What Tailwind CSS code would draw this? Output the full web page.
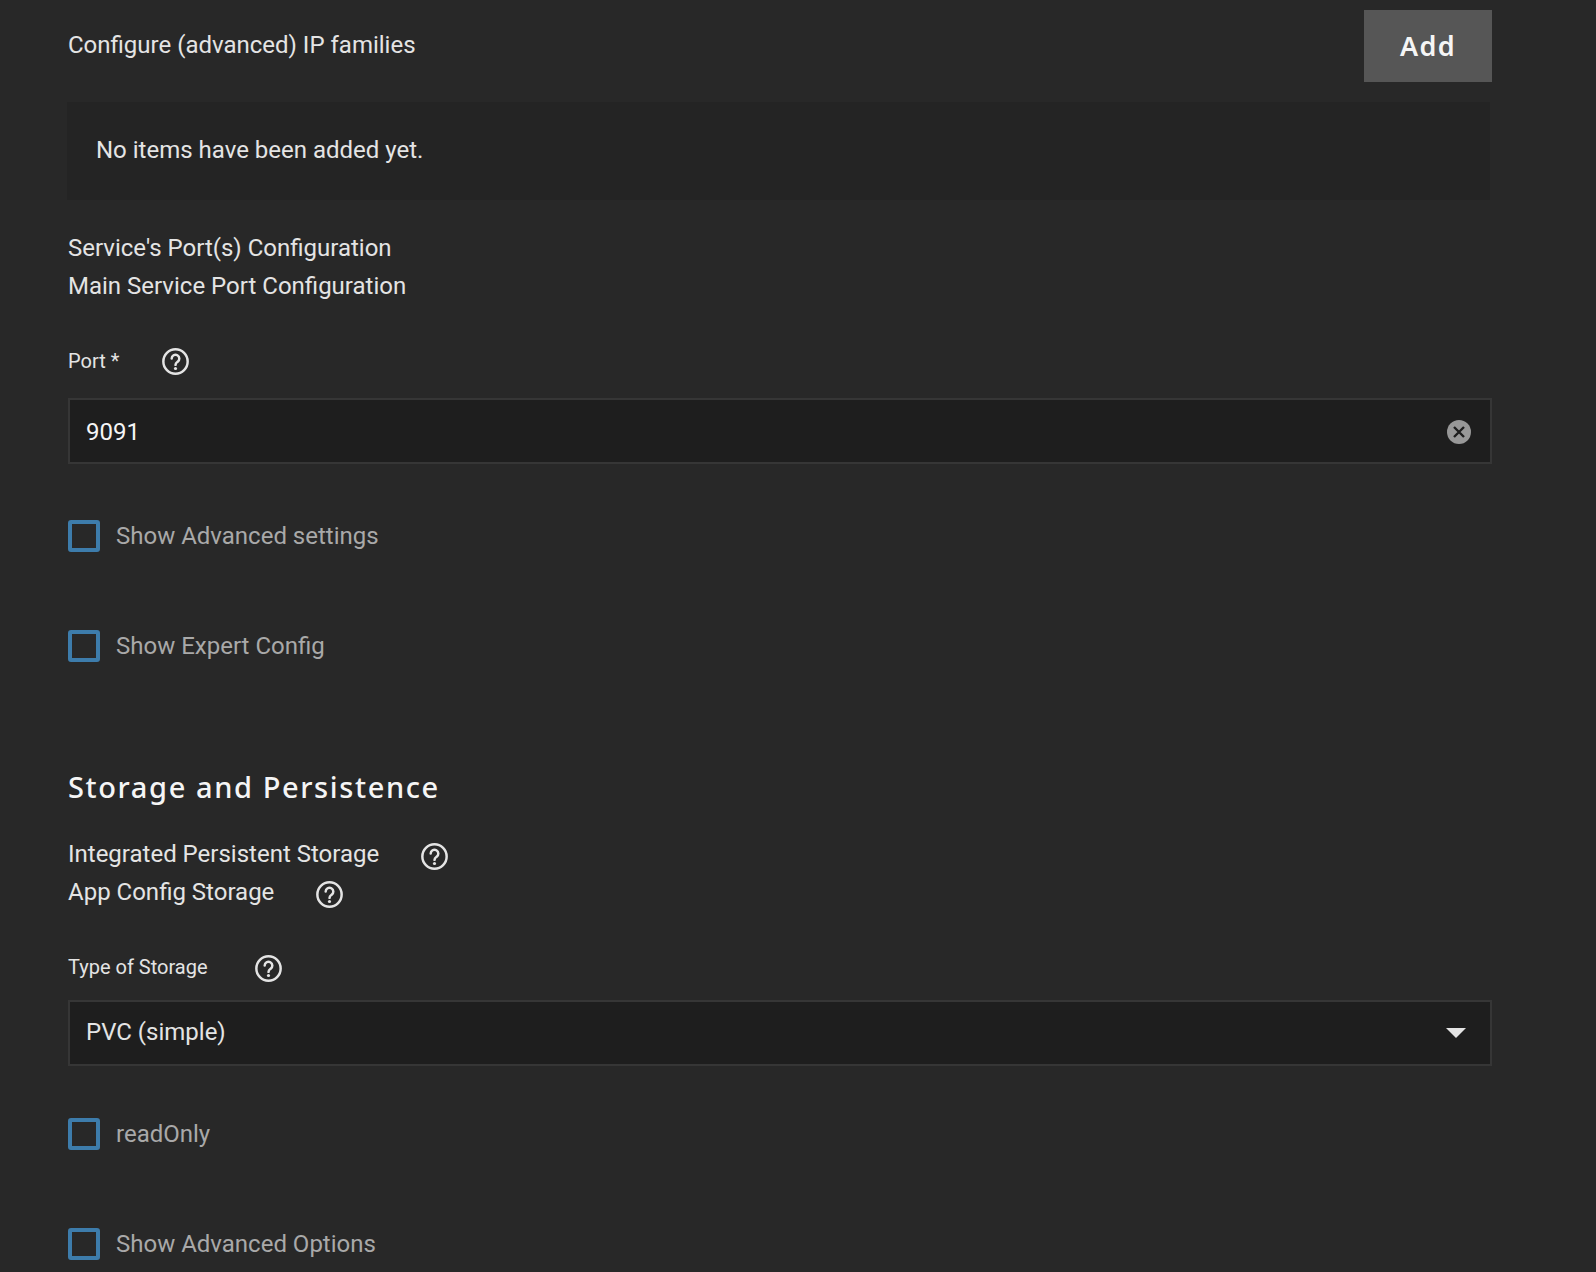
<!DOCTYPE html>
<html lang="en">
<head>
    <meta charset="UTF-8">
    <title>Storage and Persistence</title>
    <script src="https://cdn.jsdelivr.net/npm/@tailwindcss/browser@4"></script>
</head>
<body class="bg-[#282828] h-[1272px] overflow-hidden font-['Roboto',sans-serif] text-[#e4e4e4]">
    <div class="w-[1424px] ml-[68px] pt-[10px]">
        <!-- IP families -->
        <div class="flex justify-between items-start h-[72px]">
            <div class="text-[24px] leading-[38px] pt-[16px] h-[72px]">Configure (advanced) IP families</div>
            <button class="w-[128px] h-[72px] bg-[#565656] text-[#f5f5f5] text-[27px] font-semibold tracking-[1.3px] font-['Noto_Sans',sans-serif]">Add</button>
        </div>
        <div class="mt-[20px] -ml-[1px] w-[1423px] h-[98px] bg-[#242424] flex items-center pl-[29px] pb-[2px] text-[24px]">No items have been added yet.</div>

        <!-- Ports -->
        <div class="mt-[29px] text-[24px] leading-[38px]">Service's Port(s) Configuration</div>
        <div class="text-[24px] leading-[38px]">Main Service Port Configuration</div>

        <div class="mt-[43px] flex items-center h-[26px] text-[20px]">
            <span>Port *</span>
            <svg class="ml-[43px] w-[27px] h-[27px]" viewBox="0 0 24 24" fill="none" stroke="#e4e4e4" stroke-width="2.2"><circle cx="12" cy="12" r="10.8"/><path stroke-linecap="round" d="M8.6 9.4a3.4 3.4 0 1 1 5.2 2.9c-1.2.8-1.8 1.4-1.8 2.7"/><circle cx="12" cy="18.2" r="1.4" fill="#e4e4e4" stroke="none"/></svg>
        </div>
        <div class="mt-[24px] w-[1424px] h-[66px] bg-[#1e1e1e] border-2 border-[#363636] flex items-center justify-between pl-[16px] pr-[19px] text-[24px] text-[#f5f5f5]">
            <span class="pt-[2px]">9091</span>
            <svg class="w-[24px] h-[24px] mt-[2px]" viewBox="0 0 24 24"><circle cx="12" cy="12" r="12" fill="#989898"/><path d="M7 7l10 10M17 7L7 17" stroke="#1e1e1e" stroke-width="2.4"/></svg>
        </div>

        <label class="mt-[56px] flex items-center h-[32px] text-[24px] text-[#a9a9a9]">
            <span class="w-[32px] h-[32px] border-[4px] border-[#3d7cab] rounded-[3px] mr-[16px]"></span>Show Advanced settings
        </label>
        <label class="mt-[78px] flex items-center h-[32px] text-[24px] text-[#a9a9a9]">
            <span class="w-[32px] h-[32px] border-[4px] border-[#3d7cab] rounded-[3px] mr-[16px]"></span>Show Expert Config
        </label>

        <!-- Storage -->
        <h2 class="mt-[104px] h-[42px] leading-[42px] text-[29px] font-medium tracking-[1.6px] text-[#f5f5f5] font-['Noto_Sans',sans-serif]">Storage and Persistence</h2>
        <div class="mt-[27px] flex items-center h-[38px] text-[24px]">
            <span>Integrated Persistent Storage</span>
            <svg class="ml-[42px] mt-[4px] w-[27px] h-[27px]" viewBox="0 0 24 24" fill="none" stroke="#e4e4e4" stroke-width="2.2"><circle cx="12" cy="12" r="10.8"/><path stroke-linecap="round" d="M8.6 9.4a3.4 3.4 0 1 1 5.2 2.9c-1.2.8-1.8 1.4-1.8 2.7"/><circle cx="12" cy="18.2" r="1.4" fill="#e4e4e4" stroke="none"/></svg>
        </div>
        <div class="flex items-center h-[38px] text-[24px]">
            <span>App Config Storage</span>
            <svg class="ml-[42px] mt-[4px] w-[27px] h-[27px]" viewBox="0 0 24 24" fill="none" stroke="#e4e4e4" stroke-width="2.2"><circle cx="12" cy="12" r="10.8"/><path stroke-linecap="round" d="M8.6 9.4a3.4 3.4 0 1 1 5.2 2.9c-1.2.8-1.8 1.4-1.8 2.7"/><circle cx="12" cy="18.2" r="1.4" fill="#e4e4e4" stroke="none"/></svg>
        </div>

        <div class="mt-[43px] flex items-center h-[26px] text-[20px]">
            <span>Type of Storage</span>
            <svg class="ml-[47px] mt-[2px] w-[27px] h-[27px]" viewBox="0 0 24 24" fill="none" stroke="#e4e4e4" stroke-width="2.2"><circle cx="12" cy="12" r="10.8"/><path stroke-linecap="round" d="M8.6 9.4a3.4 3.4 0 1 1 5.2 2.9c-1.2.8-1.8 1.4-1.8 2.7"/><circle cx="12" cy="18.2" r="1.4" fill="#e4e4e4" stroke="none"/></svg>
        </div>
        <div class="mt-[20px] w-[1424px] h-[66px] bg-[#1e1e1e] border-2 border-[#363636] flex items-center justify-between pl-[16px] pr-[24px] text-[24px]">
            <span class="pb-[2px]">PVC (simple)</span>
            <span class="w-0 h-0 border-x-[10px] border-x-transparent border-t-[10px] border-t-[#e4e4e4]"></span>
        </div>

        <label class="mt-[52px] flex items-center h-[32px] text-[24px] text-[#a9a9a9]">
            <span class="w-[32px] h-[32px] border-[4px] border-[#3d7cab] rounded-[3px] mr-[16px]"></span>readOnly
        </label>
        <label class="mt-[78px] flex items-center h-[32px] text-[24px] text-[#a9a9a9]">
            <span class="w-[32px] h-[32px] border-[4px] border-[#3d7cab] rounded-[3px] mr-[16px]"></span>Show Advanced Options
        </label>
    </div>
</body>
</html>
